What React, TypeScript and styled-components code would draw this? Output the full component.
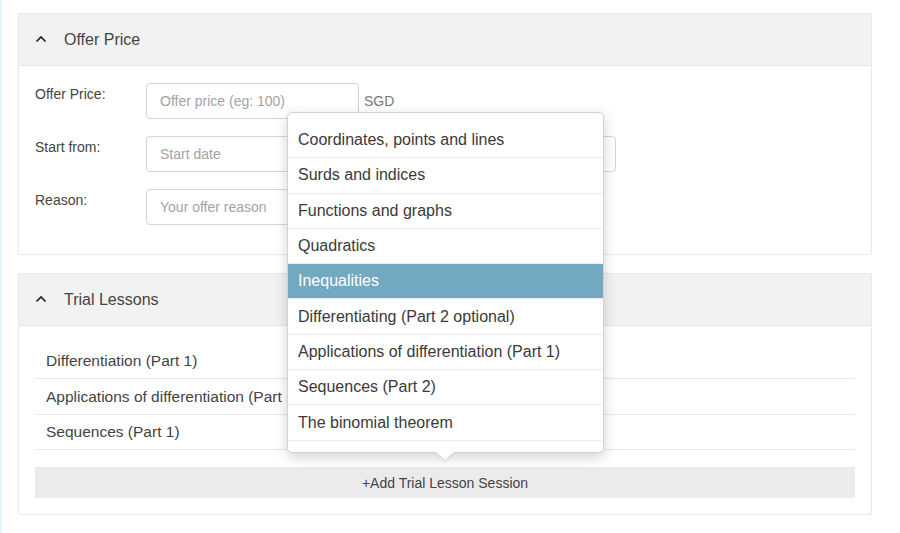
import styled, { createGlobalStyle } from "styled-components";

const GlobalStyle = createGlobalStyle`
  html, body {
    margin: 0;
    padding: 0;
    background: #ffffff;
  }
  body {
    font-family: "Liberation Sans", Arial, sans-serif;
    color: #333;
  }
  * {
    box-sizing: border-box;
  }
`;

const topics = [
  "Coordinates, points and lines",
  "Surds and indices",
  "Functions and graphs",
  "Quadratics",
  "Inequalities",
  "Differentiating (Part 2 optional)",
  "Applications of differentiation (Part 1)",
  "Sequences (Part 2)",
  "The binomial theorem",
];

const lessons = [
  "Differentiation (Part 1)",
  "Applications of differentiation (Part 1)",
  "Sequences (Part 1)",
];

const Chevron = () => (
  <svg width="12" height="8" viewBox="0 0 12 8" fill="none">
    <path d="M1.5 6.5 L6 2 L10.5 6.5" stroke="#222" strokeWidth="1.7" />
  </svg>
);

const App = () => {
  return (
    <Page>
      <GlobalStyle />
      <Panel>
        <PanelHeader>
          <Chevron />
          <span>Offer Price</span>
        </PanelHeader>
        <FormBody>
          <FormRow>
            <Label>Offer Price:</Label>
            <Input $width={213} placeholder="Offer price (eg: 100)" />
            <Unit>SGD</Unit>
          </FormRow>
          <FormRow>
            <Label>Start from:</Label>
            <Input $width={470} placeholder="Start date" />
          </FormRow>
          <FormRow>
            <Label>Reason:</Label>
            <Input $width={213} placeholder="Your offer reason" />
          </FormRow>
        </FormBody>
      </Panel>

      <Panel>
        <PanelHeader>
          <Chevron />
          <span>Trial Lessons</span>
        </PanelHeader>
        <LessonBody>
          <LessonList>
            {lessons.map((l) => (
              <LessonRow key={l}>{l}</LessonRow>
            ))}
          </LessonList>
          <AddButton type="button">+Add Trial Lesson Session</AddButton>
        </LessonBody>
      </Panel>

      <Dropdown>
        {topics.map((t) => (
          <Option key={t} $active={t === "Inequalities"}>
            {t}
          </Option>
        ))}
      </Dropdown>
    </Page>
  );
};

const Page = styled.div`
  position: relative;
  min-height: 533px;
  border-left: 2px solid #e6f2fb;
  padding: 13px 26px 0 16px;
  display: flex;
  flex-direction: column;
  gap: 18px;
  width: 898px;
`;

const Panel = styled.section`
  width: 854px;
  border: 1px solid #e9e9e9;
  border-radius: 2px;
  background: #fff;
`;

const PanelHeader = styled.div`
  height: 52px;
  background: #f2f2f2;
  border-bottom: 1px solid #e6e6e6;
  display: flex;
  align-items: center;
  gap: 17px;
  padding-left: 16px;
  font-size: 16px;
  color: #444;

  svg {
    margin-top: -2px;
  }
`;

const FormBody = styled.div`
  display: flex;
  flex-direction: column;
  gap: 17px;
  padding: 17px 16px 29px;
`;

const FormRow = styled.div`
  display: flex;
  align-items: flex-start;
`;

const Label = styled.label`
  width: 111px;
  padding-top: 3px;
  font-size: 14px;
  color: #444;
`;

const Input = styled.input<{ $width: number }>`
  width: ${(p) => p.$width}px;
  height: 36px;
  border: 1px solid #d4d4d4;
  border-radius: 4px;
  padding: 0 13px;
  font-family: "Liberation Sans", Arial, sans-serif;
  font-size: 14px;
  color: #333;
  background: #fff;
  outline: none;

  &::placeholder {
    color: #a3a3a3;
  }
`;

const Unit = styled.span`
  margin-left: 5px;
  padding-top: 10px;
  font-size: 14px;
  color: #777;
`;

const LessonBody = styled.div`
  padding: 18px 16px 16px;
  display: flex;
  flex-direction: column;
  gap: 17px;
`;

const LessonList = styled.div`
  display: flex;
  flex-direction: column;
`;

const LessonRow = styled.div`
  height: 35.4px;
  display: flex;
  align-items: center;
  padding-left: 11px;
  border-bottom: 1px solid #e8e8e8;
  font-size: 15.5px;
  color: #444;
`;

const AddButton = styled.button`
  height: 31px;
  border: none;
  background: #ebebeb;
  font-family: "Liberation Sans", Arial, sans-serif;
  font-size: 14px;
  color: #444;
  cursor: pointer;
`;

const Dropdown = styled.div`
  position: absolute;
  left: 285px;
  top: 112px;
  width: 317px;
  height: 341px;
  padding-top: 10px;
  background: #fff;
  border: 1px solid #d2d2d2;
  border-radius: 5px;
  box-shadow: 0 4px 14px rgba(0, 0, 0, 0.18);

  &::after {
    content: "";
    position: absolute;
    left: 148px;
    bottom: -8px;
    border-left: 9px solid transparent;
    border-right: 9px solid transparent;
    border-top: 8px solid #fff;
    filter: drop-shadow(0 2px 1px rgba(0, 0, 0, 0.08));
  }
`;

const Option = styled.div<{ $active?: boolean }>`
  height: 35.3px;
  display: flex;
  align-items: center;
  padding-left: 10px;
  font-size: 16px;
  color: ${(p) => (p.$active ? "#fff" : "#3a3a3a")};
  background: ${(p) => (p.$active ? "#72a9c1" : "#fff")};
  border-bottom: 1px solid #ededed;
`;

export default App;
